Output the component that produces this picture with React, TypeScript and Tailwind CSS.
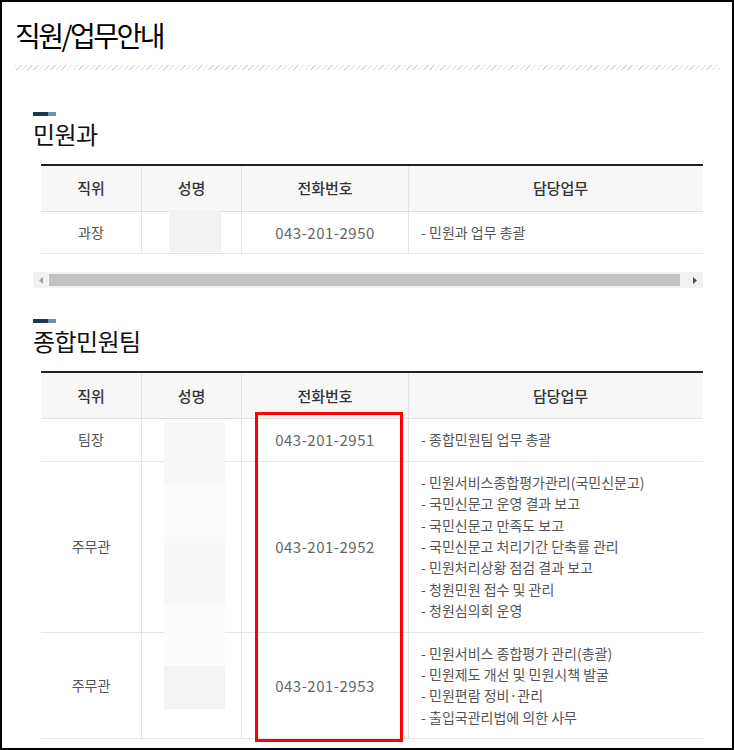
import React from "react";

type Row = { pos: string; tel: string; duties: string[] };

const team1: Row[] = [{ pos: "과장", tel: "043-201-2950", duties: ["민원과 업무 총괄"] }];

const team2: Row[] = [
  { pos: "팀장", tel: "043-201-2951", duties: ["종합민원팀 업무 총괄"] },
  {
    pos: "주무관",
    tel: "043-201-2952",
    duties: [
      "민원서비스종합평가관리(국민신문고)",
      "국민신문고 운영 결과 보고",
      "국민신문고 만족도 보고",
      "국민신문고 처리기간 단축률 관리",
      "민원처리상황 점검 결과 보고",
      "청원민원 접수 및 관리",
      "청원심의회 운영",
    ],
  },
  {
    pos: "주무관",
    tel: "043-201-2953",
    duties: ["민원서비스 종합평가 관리(총괄)", "민원제도 개선 및 민원시책 발굴", "민원편람 정비·관리", "출입국관리법에 의한 사무"],
  },
];

const cols = "grid grid-cols-[100px_100px_167px_304px]";

function Heading({ title }: { title: string }) {
  return (
    <div>
      <div className="flex h-[4px] w-[23px]">
        <span className="w-[15px] bg-[#1c3557]" />
        <span className="w-[8px] bg-[#6d8dc4]" />
      </div>
      <h3 className="mt-[3px] text-[24px] leading-[30px] tracking-[-0.6px] text-[#111]">{title}</h3>
    </div>
  );
}

function StaffTable({ rows, children }: { rows: Row[]; children?: React.ReactNode }) {
  return (
    <div className="relative ml-[8px] mt-[15px] w-[662px] overflow-hidden">
      <div className="w-[671px] border-t-2 border-[#222]">
        <div className={`${cols} h-[46px] border-b border-[#dedede] bg-[#f7f7f7] text-[15px] font-medium text-[#333]`}>
          {["직위", "성명", "전화번호", "담당업무"].map((h, i) => (
            <div key={h} className={`flex items-center justify-center ${i > 0 ? "border-l border-[#e3e3e3]" : ""}`}>
              {h}
            </div>
          ))}
        </div>
        {rows.map((r, idx) => (
          <div key={idx} className={`${cols} border-b border-[#e5e5e5] text-[14px] leading-[21.4px]`}>
            <div className="flex items-center justify-center text-[#555]">{r.pos}</div>
            <div className="border-l border-[#e3e3e3]" />
            <div className="flex items-center justify-center border-l border-[#e3e3e3] text-[15px] tracking-[0.5px] text-[#666]">
              {r.tel}
            </div>
            <div className="border-l border-[#e3e3e3] py-[10px] pl-[12px] text-[#555]">
              {r.duties.map((d) => (
                <div key={d}>- {d}</div>
              ))}
            </div>
          </div>
        ))}
      </div>
      {children}
    </div>
  );
}

function ScrollBar() {
  return (
    <div className="mt-[18px] flex h-[16px] w-[670px] bg-[#f1f1f1]">
      <div className="flex w-[16px] items-center justify-center">
        <svg width="4" height="7" viewBox="0 0 4 7">
          <path d="M4 0 L0 3.5 L4 7 Z" fill="#a3a3a3" />
        </svg>
      </div>
      <div className="my-[2px] w-[631px] bg-[#c1c1c1]" />
      <div className="ml-auto flex w-[16px] items-center justify-center">
        <svg width="4" height="7" viewBox="0 0 4 7">
          <path d="M0 0 L4 3.5 L0 7 Z" fill="#505050" />
        </svg>
      </div>
    </div>
  );
}

export default function App() {
  return (
    <div className="relative box-border h-[750px] w-[734px] overflow-hidden border-2 border-black bg-white font-['Noto_Sans_CJK_KR','Noto_Sans',sans-serif]">
      <h2 className="pl-[13px] pt-[16px] text-[28px] leading-[34px] tracking-[-2.5px] text-black">직원/업무안내</h2>
      <div className="ml-[13px] mr-[12px] mt-[13px] h-[5px] bg-[repeating-linear-gradient(135deg,#d9d9d9_0,#d9d9d9_1px,transparent_1px,transparent_4px)]" />

      <div className="pl-[31px] pt-[42px]">
        <Heading title="민원과" />
        <StaffTable rows={team1}>
          <div className="absolute left-[128px] top-[46px] h-[42px] w-[52px] bg-[#f2f2f2]" />
        </StaffTable>
        <ScrollBar />

        <div className="mt-[31px]">
          <Heading title="종합민원팀" />
          <StaffTable rows={team2}>
            <div className="absolute left-[123px] top-[51px] flex w-[61px] flex-col">
              <div className="h-[61px] bg-[#f7f7f7]" />
              <div className="h-[60px] bg-[#fbfbfb]" />
              <div className="h-[62px] bg-[#f8f8f8]" />
              <div className="h-[61px] bg-[#fcfcfc]" />
              <div className="h-[43px] bg-[#f3f3f3]" />
            </div>
          </StaffTable>
        </div>
      </div>

      <div className="absolute left-[253px] top-[410px] h-[330px] w-[148px] border-[3px] border-[#ff0000]" />
    </div>
  );
}
